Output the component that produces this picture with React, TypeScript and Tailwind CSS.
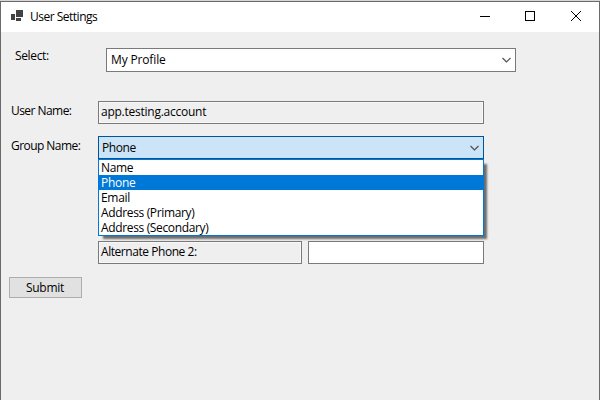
import React from "react";

const options = [
  { label: "Name", className: "tracking-[-0.35px]" },
  { label: "Phone", className: "bg-[#0078d7] text-white tracking-[-0.3px]" },
  { label: "Email", className: "tracking-[-0.3px]" },
  { label: "Address (Primary)", className: "tracking-[-0.35px]" },
  { label: "Address (Secondary)", className: "tracking-[-0.35px]" },
];

function Chevron() {
  return (
    <svg width="9" height="6" viewBox="0 0 9 6" fill="none" stroke="#505050" strokeWidth="1.2">
      <path d="M0.5 1 L4.5 5 L8.5 1" />
    </svg>
  );
}

function TitleBar() {
  return (
    <header className="flex h-[30px] items-start bg-white pl-[10px]">
      <svg className="mt-2 shrink-0" width="12" height="12" viewBox="0 0 12 12" fill="#424242" shapeRendering="crispEdges">
        <path d="M5 0h7v7H5zM0 4h4v6H0zM5 8h5v3H5z" />
      </svg>
      <h1 className="ml-[7px] mt-[7px] leading-4 tracking-[-0.5px]">User Settings</h1>
      <div className="ml-auto mt-[8px] flex pr-[18px]">
        <svg className="mr-[35px]" width="10" height="11" shapeRendering="crispEdges"><path d="M0 6h10v1H0z" /></svg>
        <svg className="mr-[36px]" width="10" height="11" fill="none" stroke="#000" shapeRendering="crispEdges"><path d="M.5 1.5h9v9h-9z" /></svg>
        <svg width="10" height="11" fill="none" stroke="#000"><path d="M0 1l10 10M10 1L0 11" /></svg>
      </div>
    </header>
  );
}

export default function App() {
  return (
    <div className="flex h-[400px] w-[600px] flex-col overflow-hidden border-t border-[#d6d6d6] bg-[#efefef] font-['Open_Sans','Noto_Sans',sans-serif] text-[12px] text-black">
      <div className="flex flex-1 flex-col border-x border-t border-[#6b6b6b]">
        <TitleBar />
        <main className="flex flex-col">
          <div className="flex pt-4">
            <label className="w-[105px] pl-[14px] leading-4 tracking-[-0.35px]">Select:</label>
            <div className="flex h-6 w-[410px] items-center justify-between border border-[#7a7a7a] bg-white pl-1 pr-[4px] leading-4">
              <span className="tracking-[-0.15px]">My Profile</span>
              <Chevron />
            </div>
          </div>
          <div className="mt-[29px] flex">
            <label className="w-[97px] pl-[10px] pt-[2px] leading-4 tracking-[-0.55px]">User Name:</label>
            <div className="h-[23px] w-[386px] border border-[#7a7a7a] pl-[2px] pt-[2px] leading-4 tracking-[-0.25px] shadow-[inset_0_0_0_1px_#f8f8f8]">app.testing.account</div>
          </div>
          <div className="mt-3 flex">
            <label className="w-[97px] pl-[10px] pt-[2px] leading-4 tracking-[-0.55px]">Group Name:</label>
            <div className="relative flex h-[23px] w-[386px] items-center justify-between border border-[#005499] bg-[#cce4f7] pl-[3px] pr-[4px] leading-4">
              <span className="tracking-[-0.4px]">Phone</span>
              <Chevron />
              <ul className="absolute left-[-1px] top-[22px] z-10 h-[77px] w-[386px] border border-[#0078d7] bg-white shadow-[4px_4px_2px_-1px_rgba(0,0,0,0.55)]">
                {options.map(({ label, className }) => (
                  <li key={label} className={`h-[15px] pl-[2px] leading-[15px] ${className}`}>{label}</li>
                ))}
              </ul>
            </div>
          </div>
          <div className="ml-[97px] mt-[82px] flex gap-[6px]">
            <div className="h-[23px] w-[204px] border border-[#7a7a7a] pl-[2px] pt-[2px] leading-4 tracking-[-0.45px] shadow-[inset_0_0_0_1px_#f8f8f8]">Alternate Phone 2:</div>
            <div className="h-[23px] w-[176px] border border-[#7a7a7a] bg-white" />
          </div>
          <button className="ml-2 mt-[13px] h-[21px] w-[73px] border border-[#adadad] bg-[#e1e1e1] pr-px leading-[19px] tracking-[-0.25px]">Submit</button>
        </main>
      </div>
    </div>
  );
}
